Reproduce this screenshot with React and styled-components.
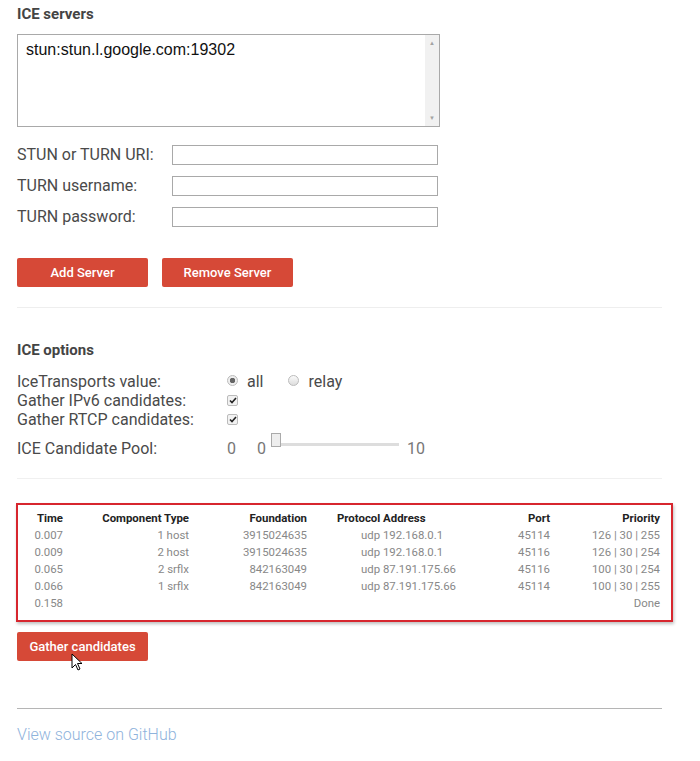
import React from "react";
import styled, { createGlobalStyle } from "styled-components";

const Global = createGlobalStyle`
  body {
    margin: 0;
    background: #fff;
    font-family: Roboto, "Noto Sans", sans-serif;
    color: #444;
  }
`;

const Page = styled.div`
  width: 645px;
  padding: 0 0 0 17px;
`;

const Section = styled.section`
  padding: ${(p) => p.pad || "0"};
  border-bottom: ${(p) => (p.line ? `1px solid ${p.line}` : "none")};
`;

const Heading = styled.h2`
  margin: 0;
  font-size: 15px;
  font-weight: 700;
  color: #444;
  line-height: 20px;
`;

const ServerList = styled.div`
  position: relative;
  margin-top: 10px;
  border: 1px solid #a9a9a9;
  font-family: "Liberation Sans", Arial, sans-serif;
  font-size: 16px;
  color: #111;
  padding: 6px 0 0 8px;
  box-sizing: border-box;
  width: 423px;
  height: 93px;
`;

const Scrollbar = styled.div`
  position: absolute;
  top: 0;
  right: 0;
  bottom: 0;
  width: 14px;
  background: #f1f1f1;
  display: flex;
  flex-direction: column;
  justify-content: space-between;
  align-items: center;
  padding: 5px 0;
  box-sizing: border-box;
  font-size: 6px;
  color: #a3a3a3;
  line-height: 6px;
`;

const FieldGrid = styled.div`
  display: grid;
  grid-template-columns: 155px 266px;
  row-gap: 11px;
  margin-top: 18px;
  align-items: center;
`;

const Label = styled.label`
  font-size: 16px;
  font-weight: 400;
  color: #4a4a4a;
  line-height: 20px;
`;

const TextInput = styled.div`
  height: 20px;
  border: 1px solid #a9a9a9;
  box-sizing: border-box;
`;

const ButtonRow = styled.div`
  display: flex;
  gap: 14px;
  margin-top: 31px;
`;

const Button = styled.button`
  position: relative;
  display: block;
  width: 131px;
  height: 29px;
  border: none;
  border-radius: 2px;
  background: #d64937;
  color: #fff;
  font-family: Roboto, sans-serif;
  font-size: 13px;
  font-weight: 500;
  padding: 0;
  cursor: pointer;
`;

const OptionRow = styled.div`
  display: grid;
  grid-template-columns: 210px auto;
  align-items: center;
  height: ${(p) => p.h || 19}px;
  margin-top: ${(p) => p.mt || 0}px;
`;

const OptLabel = styled.span`
  font-size: 16px;
  color: #4a4a4a;
  line-height: 19px;
`;

const Inline = styled.div`
  display: flex;
  align-items: center;
`;

const Radio = styled.span`
  width: 11px;
  height: 11px;
  border-radius: 50%;
  border: 1px solid #bbb;
  background: ${(p) =>
    p.on
      ? "radial-gradient(circle, #666 0 2.5px, #eee 3px)"
      : "linear-gradient(#fafafa, #ddd)"};
  box-sizing: border-box;
  margin: 0 9px 3px 0;
`;

const RadioText = styled.span`
  font-size: 16px;
  color: #4a4a4a;
  margin-right: ${(p) => p.mr || 0}px;
`;

const Check = styled.span`
  width: 11px;
  height: 11px;
  border: 1px solid #bbb;
  border-radius: 2px;
  background: #f2f2f2;
  box-sizing: border-box;
  display: flex;
  align-items: center;
  justify-content: center;
`;

const Num = styled.span`
  font-size: 16px;
  color: #777;
  margin-left: ${(p) => p.ml || 0}px;
`;

const Track = styled.div`
  position: relative;
  width: 128px;
  height: 3px;
  background: #ddd;
  margin: 0 8px 8px 5px;
`;

const Thumb = styled.div`
  position: absolute;
  left: 0;
  top: -10px;
  width: 10px;
  height: 14px;
  border: 1px solid #aaa;
  background: #eee;
  box-sizing: border-box;
`;

const ResultBox = styled.div`
  margin-top: 24px;
  width: 657px;
  margin-left: -1px;
  border: 2px solid #d7262e;
  box-shadow: 1px 2px 3px rgba(0, 0, 0, 0.25);
  box-sizing: border-box;
  padding: 4px 0 9px 0;
`;

const Table = styled.table`
  border-collapse: collapse;
  table-layout: fixed;
  width: 642px;
  font-size: 11.4px;
`;

const Th = styled.th`
  text-align: ${(p) => p.align || "right"};
  padding: 0 0 0 ${(p) => p.pl || 0}px;
  height: 17px;
  font-weight: 700;
  color: #222;
  white-space: nowrap;
`;

const Td = styled.td`
  text-align: ${(p) => p.align || "right"};
  padding: 0 0 0 ${(p) => p.pl || 0}px;
  height: 17px;
  color: #888;
  white-space: nowrap;
`;

const Gather = styled(Button)`
  margin-top: 10px;
`;

const Footer = styled.div`
  margin-top: 47px;
  border-top: 1px solid #b5b5b5;
  padding-top: 16px;
`;

const Link = styled.a`
  font-size: 16px;
  font-weight: 300;
  color: #8fb3dc;
  text-decoration: none;
`;

const Cursor = styled.svg`
  position: absolute;
  left: 54px;
  top: 21px;
`;

const rows = [
  ["0.007", "1 host", "3915024635", "udp 192.168.0.1", "45114", "126 | 30 | 255"],
  ["0.009", "2 host", "3915024635", "udp 192.168.0.1", "45116", "126 | 30 | 254"],
  ["0.065", "2 srflx", "842163049", "udp 87.191.175.66", "45116", "100 | 30 | 254"],
  ["0.066", "1 srflx", "842163049", "udp 87.191.175.66", "45114", "100 | 30 | 255"],
  ["0.158", "", "", "", "", "Done"],
];

const Tick = () => (
  <svg width="8" height="7" viewBox="0 0 8 7">
    <path d="M1 3.5 L3 5.5 L7 1" stroke="#222" strokeWidth="1.6" fill="none" />
  </svg>
);

export default function App() {
  return (
    <Page>
      <Global />
      <Section pad="4px 0 20px 0" line="#eee">
        <Heading>ICE servers</Heading>
        <ServerList>
          stun:stun.l.google.com:19302
          <Scrollbar>
            <span>▲</span>
            <span>▼</span>
          </Scrollbar>
        </ServerList>
        <FieldGrid>
          <Label>STUN or TURN URI:</Label>
          <TextInput />
          <Label>TURN username:</Label>
          <TextInput />
          <Label>TURN password:</Label>
          <TextInput />
        </FieldGrid>
        <ButtonRow>
          <Button>Add Server</Button>
          <Button>Remove Server</Button>
        </ButtonRow>
      </Section>

      <Section pad="32px 0 16px 0" line="#f0f0f0">
        <Heading>ICE options</Heading>
        <OptionRow mt={12}>
          <OptLabel>IceTransports value:</OptLabel>
          <Inline>
            <Radio on />
            <RadioText mr={25}>all</RadioText>
            <Radio />
            <RadioText>relay</RadioText>
          </Inline>
        </OptionRow>
        <OptionRow>
          <OptLabel>Gather IPv6 candidates:</OptLabel>
          <Inline>
            <Check>
              <Tick />
            </Check>
          </Inline>
        </OptionRow>
        <OptionRow>
          <OptLabel>Gather RTCP candidates:</OptLabel>
          <Inline>
            <Check>
              <Tick />
            </Check>
          </Inline>
        </OptionRow>
        <OptionRow h={28} mt={5}>
          <OptLabel>ICE Candidate Pool:</OptLabel>
          <Inline>
            <Num>0</Num>
            <Num ml={21}>0</Num>
            <Track>
              <Thumb />
            </Track>
            <Num>10</Num>
          </Inline>
        </OptionRow>
      </Section>

      <ResultBox>
        <Table>
          <colgroup>
            <col style={{ width: 45 }} />
            <col style={{ width: 126 }} />
            <col style={{ width: 118 }} />
            <col style={{ width: 163 }} />
            <col style={{ width: 80 }} />
            <col style={{ width: 110 }} />
          </colgroup>
          <thead>
            <tr>
              <Th>Time</Th>
              <Th>Component Type</Th>
              <Th>Foundation</Th>
              <Th align="left" pl={30}>Protocol Address</Th>
              <Th>Port</Th>
              <Th>Priority</Th>
            </tr>
          </thead>
          <tbody>
            {rows.map((r, i) => (
              <tr key={i}>
                <Td>{r[0]}</Td>
                <Td>{r[1]}</Td>
                <Td>{r[2]}</Td>
                <Td align="left" pl={54}>{r[3]}</Td>
                <Td>{r[4]}</Td>
                <Td>{r[5]}</Td>
              </tr>
            ))}
          </tbody>
        </Table>
      </ResultBox>

      <Gather>
        Gather candidates
        <Cursor width="12" height="19" viewBox="0 0 12 19">
          <path
            d="M1 1 L1 15 L4.5 11.5 L7 17 L9 16 L6.5 10.5 L11 10.5 Z"
            fill="#fff"
            stroke="#000"
            strokeWidth="1"
          />
        </Cursor>
      </Gather>

      <Footer>
        <Link href="#">View source on GitHub</Link>
      </Footer>
    </Page>
  );
}
